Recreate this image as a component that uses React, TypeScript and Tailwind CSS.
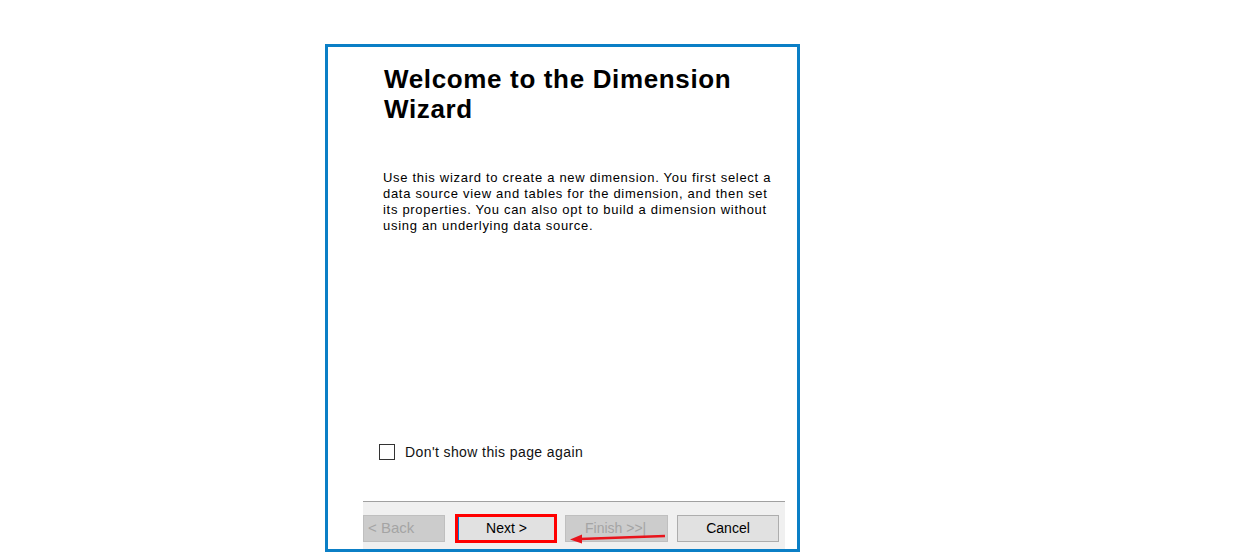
import React from 'react';

const font = { fontFamily: '"Liberation Sans", Arial, sans-serif' };

const App: React.FC = () => {
  return (
    <div className="w-[1239px] h-[557px] bg-white relative" style={font}>
      <div className="absolute left-[325px] top-[44px] w-[475px] h-[508px] border-[3px] border-[#0b7fc6] bg-white flex flex-col">
        {/* Wizard body */}
        <div className="flex-1 flex flex-col pl-[56px] pr-[10px] pt-[17px]">
          <h1 className="text-[26px] leading-[30px] font-bold text-black tracking-[0.65px]">
            Welcome to the Dimension
            <br />
            Wizard
          </h1>
          <p className="mt-[46px] text-[13px] leading-[16px] text-black tracking-[0.7px] -ml-[1px] whitespace-nowrap">
            Use this wizard to create a new dimension. You first select a
            <br />
            data source view and tables for the dimension, and then set
            <br />
            its properties. You can also opt to build a dimension without
            <br />
            using an underlying data source.
          </p>
          <div className="flex-1" />
          <label className="flex items-center gap-[10px] -ml-[5px] mb-[40px]">
            <span className="w-[16px] h-[16px] border border-[#333333] bg-white" />
            <span className="text-[14px] leading-[18px] text-[#111111] tracking-[0.4px]">Don't show this page again</span>
          </label>
        </div>

        {/* Button bar */}
        <div className="ml-[35px] mr-[12px] h-[48px] border-t border-[#a0a0a0] bg-[#f0f0f0] flex items-start gap-[10px] pt-[13px]">
          <button className="w-[82px] h-[27px] bg-[#cccccc] border border-[#bfbfbf] text-[15px] text-[#a4a4a4] text-left pl-[4px]">
            &lt; Back
          </button>
          <div className="w-[102px] h-[29px] -mt-[1px] border-[3px] border-[#ff0000] flex">
            <button className="flex-1 h-full bg-[#e1e1e1] border-l border-[#0078d7] text-[14px] text-black">
              Next &gt;
            </button>
          </div>
          <button className="w-[103px] h-[27px] bg-[#cccccc] border border-[#bfbfbf] text-[14px] text-[#a4a4a4] -ml-[2px] text-left pl-[19px]">
            Finish &gt;&gt;|
          </button>
          <button className="w-[102px] h-[27px] bg-[#e1e1e1] border border-[#adadad] text-[14px] text-black -ml-[1px]">
            Cancel
          </button>
        </div>
      </div>

      {/* Red annotation arrow */}
      <svg className="absolute left-[566px] top-[528px]" width="104" height="18" viewBox="0 0 104 18">
        <line x1="99" y1="8" x2="14" y2="11" stroke="#e8141c" strokeWidth="2.5" />
        <polygon points="4,11.5 16,6.5 16,15.5" fill="#e8141c" />
      </svg>
    </div>
  );
};

export default App;
